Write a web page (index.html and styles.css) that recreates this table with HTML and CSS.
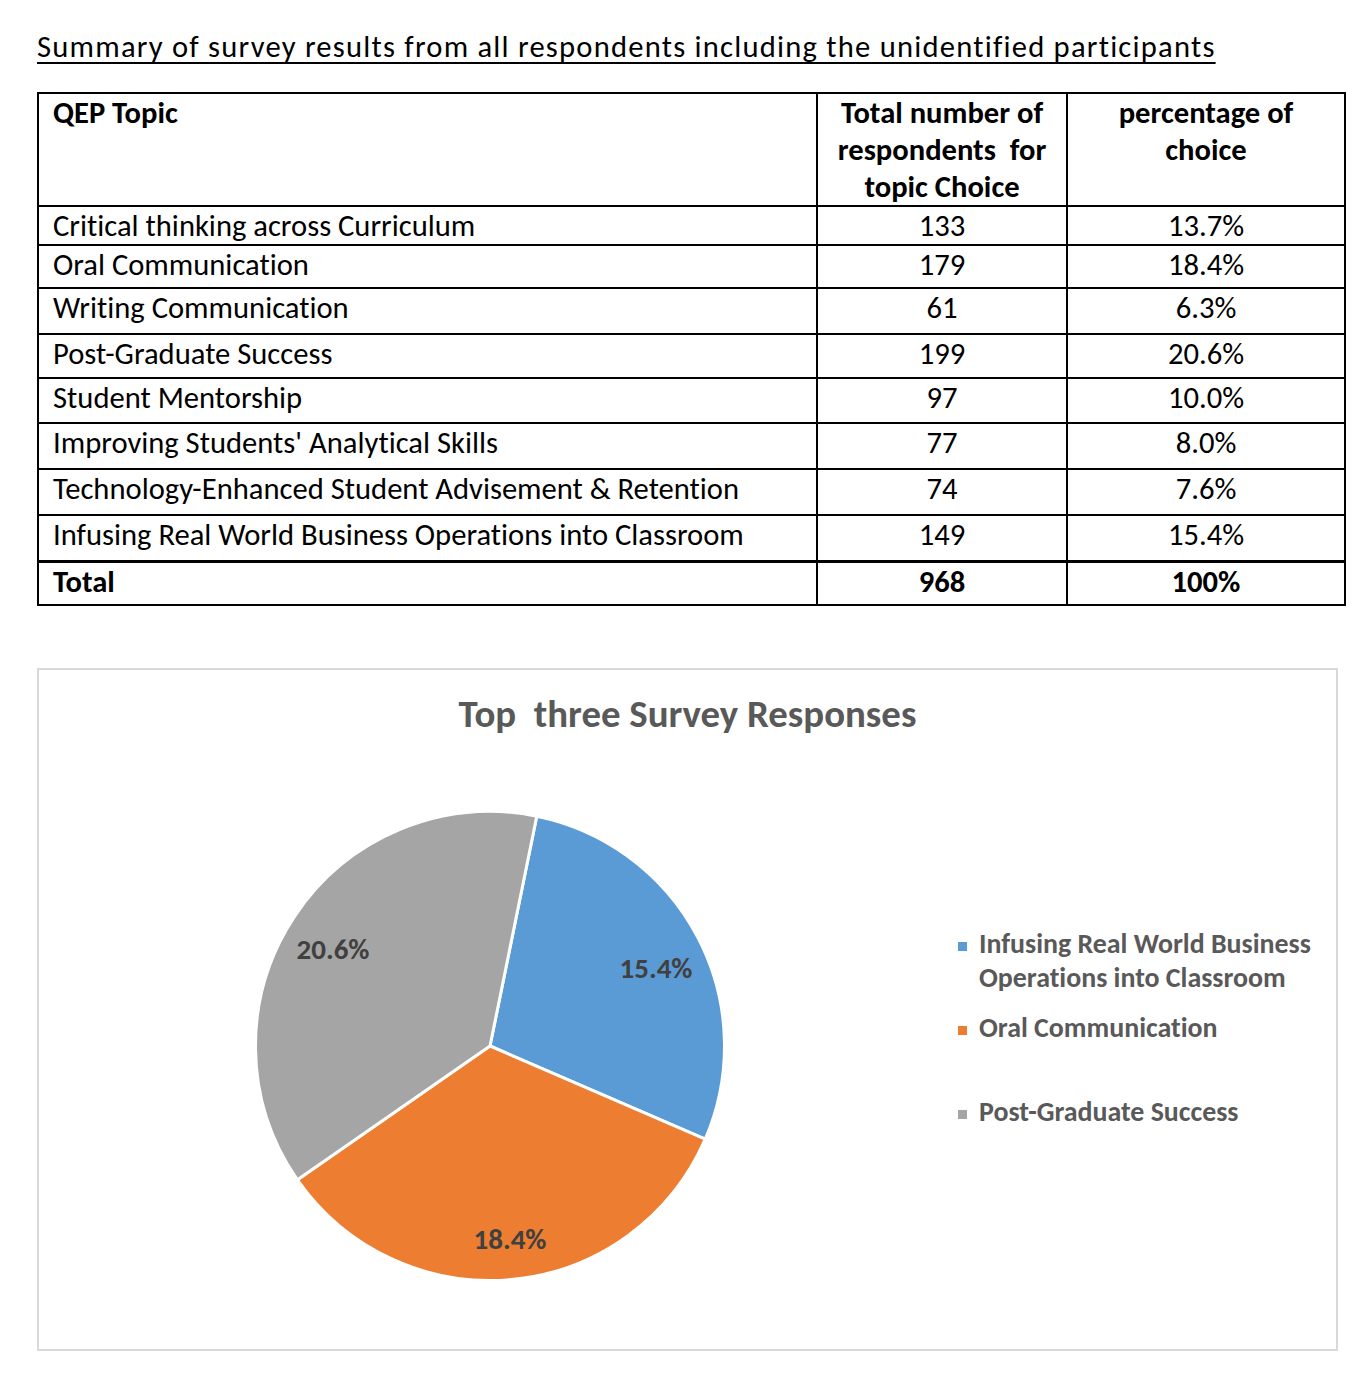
FILE: index.html
```html
<!DOCTYPE html>
<html lang="en">
<head>
<meta charset="utf-8">
<title>Summary of survey results</title>
<link rel="stylesheet" href="styles.css">
</head>
<body>
<div class="page">
  <h1 class="heading">Summary of survey results from all respondents including the unidentified participants</h1>

  <div class="qep-table" role="table">
    <div class="cell head" role="columnheader">QEP Topic</div>
    <div class="cell head num" role="columnheader">Total number of<br>respondents&nbsp; for<br>topic Choice</div>
    <div class="cell head num" role="columnheader">percentage of<br>choice</div>

    <div class="cell">Critical thinking across Curriculum</div>
    <div class="cell num">133</div>
    <div class="cell num">13.7%</div>

    <div class="cell">Oral Communication</div>
    <div class="cell num">179</div>
    <div class="cell num">18.4%</div>

    <div class="cell">Writing Communication</div>
    <div class="cell num">61</div>
    <div class="cell num">6.3%</div>

    <div class="cell">Post-Graduate Success</div>
    <div class="cell num">199</div>
    <div class="cell num">20.6%</div>

    <div class="cell">Student Mentorship</div>
    <div class="cell num">97</div>
    <div class="cell num">10.0%</div>

    <div class="cell">Improving Students' Analytical Skills</div>
    <div class="cell num">77</div>
    <div class="cell num">8.0%</div>

    <div class="cell">Technology-Enhanced Student Advisement &amp; Retention</div>
    <div class="cell num">74</div>
    <div class="cell num">7.6%</div>

    <div class="cell thick">Infusing Real World Business Operations into Classroom</div>
    <div class="cell num thick">149</div>
    <div class="cell num thick">15.4%</div>

    <div class="cell total">Total</div>
    <div class="cell num total">968</div>
    <div class="cell num total">100%</div>
  </div>

  <figure class="chart">
    <div class="chart-title">Top  three Survey Responses</div>
    <div class="chart-body">
      <svg class="pie" width="500" height="500" viewBox="0 0 500 500">
        <path class="slice blue" d="M250,250 L296.75,20.21 A234.5,234.5 0 0 1 465.21,343.14 Z"/>
        <path class="slice orange" d="M250,250 L465.21,343.14 A234.5,234.5 0 0 1 57.44,383.84 Z"/>
        <path class="slice gray" d="M250,250 L57.44,383.84 A234.5,234.5 0 0 1 296.75,20.21 Z"/>
        <text class="pie-label" x="416" y="182">15.4%</text>
        <text class="pie-label" x="270" y="453">18.4%</text>
        <text class="pie-label" x="93" y="163">20.6%</text>
      </svg>
      <ul class="legend">
        <li class="legend-item first"><span class="marker blue-m"></span><span class="legend-text">Infusing Real World Business Operations into Classroom</span></li>
        <li class="legend-item second"><span class="marker orange-m"></span><span class="legend-text">Oral Communication</span></li>
        <li class="legend-item"><span class="marker gray-m"></span><span class="legend-text">Post-Graduate Success</span></li>
      </ul>
    </div>
  </figure>
</div>
</body>
</html>
```
FILE: styles.css
```css
html, body {
  margin: 0;
  padding: 0;
  background: #ffffff;
}

body {
  font-family: "Carlito", "Calibri", "Lato", sans-serif;
  font-variant-ligatures: none;
  font-feature-settings: "liga" 0, "clig" 0;
  color: #000000;
}

.page {
  padding-left: 37px;
  width: 1333px;
}

.heading {
  margin: 28px 0 0 0;
  font-size: 30.6px;
  font-weight: 400;
  line-height: 37px;
  letter-spacing: 1.22px;
  text-decoration: underline;
  text-decoration-thickness: 2px;
  text-underline-offset: 5px;
  text-decoration-skip-ink: none;
  white-space: nowrap;
}

/* ---------- table ---------- */
.qep-table {
  margin-top: 27px;
  display: grid;
  grid-template-columns: 779px 250px 278px;
  grid-template-rows: 113px 39px 43px 46px 44px 45px 46px 46px 47px 43px;
  width: 1309px;
  box-sizing: border-box;
  border-left: 2px solid #000;
  border-top: 2px solid #000;
}

.cell {
  box-sizing: border-box;
  border-right: 2px solid #000;
  border-bottom: 2px solid #000;
  padding: 0 0 0 14px;
  font-size: 30.6px;
  line-height: 37.5px;
  white-space: nowrap;
}

.cell.num {
  text-align: center;
  padding: 0;
}

.cell.head {
  font-weight: 700;
  line-height: 37px;
}

.cell.thick {
  border-bottom-width: 3px;
}

.cell.total {
  font-weight: 700;
}

/* ---------- chart ---------- */
.chart {
  margin: 62px 0 0 0;
  width: 1301px;
  height: 683px;
  box-sizing: border-box;
  border: 2px solid #d9d9d9;
  background: #ffffff;
}

.chart-title {
  margin-top: 20px;
  text-align: center;
  font-size: 38.85px;
  line-height: 47px;
  font-weight: 700;
  color: #595959;
  white-space: pre;
}

.chart-body {
  display: flex;
  align-items: flex-start;
  margin-top: 59px;
}

.pie {
  display: block;
  margin-left: 201px;
  flex: none;
}

.slice {
  stroke: #ffffff;
  stroke-width: 3;
  stroke-linejoin: round;
}

.slice.blue { fill: #5b9bd5; }
.slice.orange { fill: #ed7d31; }
.slice.gray { fill: #a5a5a5; }

.pie-label {
  font-family: "Carlito", "Calibri", "Lato", sans-serif;
  font-size: 29px;
  font-weight: 700;
  fill: #404040;
  text-anchor: middle;
}

.legend {
  list-style: none;
  margin: 130px 0 0 218px;
  padding: 0;
  width: 360px;
}

.legend-item {
  display: flex;
  align-items: flex-start;
  font-size: 27.9px;
  line-height: 34px;
  font-weight: 700;
  color: #595959;
}

.legend-item.first { margin-bottom: 16px; }
.legend-item.second { margin-bottom: 50px; }

.legend-text {
  width: 340px;
}

.marker {
  flex: none;
  width: 9px;
  height: 9px;
  margin-top: 16px;
  margin-right: 12px;
}

.blue-m { background: #5b9bd5; }
.orange-m { background: #ed7d31; }
.gray-m { background: #a5a5a5; }
```
